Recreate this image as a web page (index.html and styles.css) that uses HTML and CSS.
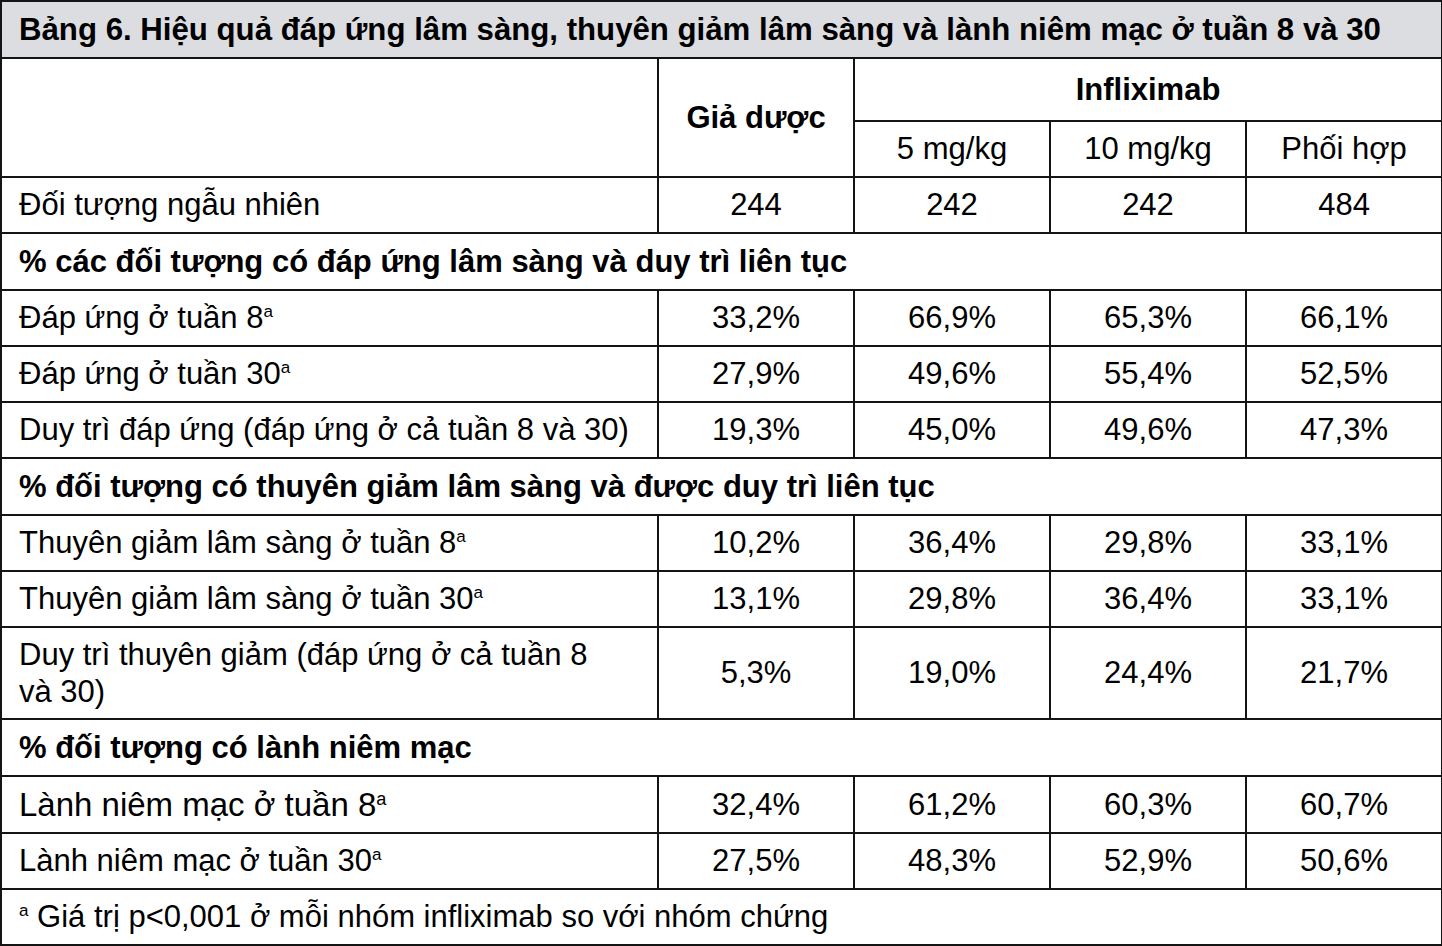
FILE: index.html
```html
<!DOCTYPE html>
<html lang="vi">
<head>
<meta charset="utf-8">
<title>Bảng 6</title>
<link rel="stylesheet" href="styles.css">
</head>
<body>
<table class="tbl">
  <colgroup>
    <col class="c-label">
    <col class="c-num">
    <col class="c-num">
    <col class="c-num">
    <col class="c-num">
  </colgroup>
  <tr class="r-title">
    <td colspan="5" class="title">Bảng 6. Hiệu quả đáp ứng lâm sàng, thuyên giảm lâm sàng và lành niêm mạc ở tuần 8 và 30</td>
  </tr>
  <tr class="r-h1">
    <td rowspan="2"></td>
    <td rowspan="2" class="hd">Giả dược</td>
    <td colspan="3" class="hd">Infliximab</td>
  </tr>
  <tr class="r-h2">
    <td class="num">5 mg/kg</td>
    <td class="num">10 mg/kg</td>
    <td class="num">Phối hợp</td>
  </tr>
  <tr class="r">
    <td class="lbl">Đối tượng ngẫu nhiên</td>
    <td class="num">244</td><td class="num">242</td><td class="num">242</td><td class="num">484</td>
  </tr>
  <tr class="r r57">
    <td colspan="5" class="sec">% các đối tượng có đáp ứng lâm sàng và duy trì liên tục</td>
  </tr>
  <tr class="r">
    <td class="lbl">Đáp ứng ở tuần 8<sup class="sup">a</sup></td>
    <td class="num">33,2%</td><td class="num">66,9%</td><td class="num">65,3%</td><td class="num">66,1%</td>
  </tr>
  <tr class="r">
    <td class="lbl">Đáp ứng ở tuần 30<sup class="sup">a</sup></td>
    <td class="num">27,9%</td><td class="num">49,6%</td><td class="num">55,4%</td><td class="num">52,5%</td>
  </tr>
  <tr class="r">
    <td class="lbl">Duy trì đáp ứng (đáp ứng ở cả tuần 8 và 30)</td>
    <td class="num">19,3%</td><td class="num">45,0%</td><td class="num">49,6%</td><td class="num">47,3%</td>
  </tr>
  <tr class="r r57">
    <td colspan="5" class="sec">% đối tượng có thuyên giảm lâm sàng và được duy trì liên tục</td>
  </tr>
  <tr class="r">
    <td class="lbl">Thuyên giảm lâm sàng ở tuần 8<sup class="sup">a</sup></td>
    <td class="num">10,2%</td><td class="num">36,4%</td><td class="num">29,8%</td><td class="num">33,1%</td>
  </tr>
  <tr class="r">
    <td class="lbl">Thuyên giảm lâm sàng ở tuần 30<sup class="sup">a</sup></td>
    <td class="num">13,1%</td><td class="num">29,8%</td><td class="num">36,4%</td><td class="num">33,1%</td>
  </tr>
  <tr class="r-tall">
    <td class="lbl">Duy trì thuyên giảm (đáp ứng ở cả tuần 8 và 30)</td>
    <td class="num">5,3%</td><td class="num">19,0%</td><td class="num">24,4%</td><td class="num">21,7%</td>
  </tr>
  <tr class="r r57">
    <td colspan="5" class="sec">% đối tượng có lành niêm mạc</td>
  </tr>
  <tr class="r r57">
    <td class="lbl big">Lành niêm mạc ở tuần 8<sup class="sup">a</sup></td>
    <td class="num">32,4%</td><td class="num">61,2%</td><td class="num">60,3%</td><td class="num">60,7%</td>
  </tr>
  <tr class="r">
    <td class="lbl">Lành niêm mạc ở tuần 30<sup class="sup">a</sup></td>
    <td class="num">27,5%</td><td class="num">48,3%</td><td class="num">52,9%</td><td class="num">50,6%</td>
  </tr>
  <tr class="r">
    <td colspan="5" class="lbl foot"><sup class="sup">a</sup> Giá trị p&lt;0,001 ở mỗi nhóm infliximab so với nhóm chứng</td>
  </tr>
</table>
</body>
</html>
```
FILE: styles.css
```css
html, body {
  margin: 0;
  padding: 0;
  background: #ffffff;
}
body {
  font-family: "Liberation Sans", Arial, sans-serif;
  color: #000000;
}
.tbl {
  border-collapse: collapse;
  table-layout: fixed;
  width: 1440px;
  margin: 0;
  font-size: 31px;
  line-height: 36px;
}
.c-label { width: 657px; }
.c-num { width: 196px; }
.tbl td {
  border: 2px solid #141414;
  padding: 0 17px;
  vertical-align: middle;
  box-sizing: border-box;
  overflow: hidden;
  white-space: nowrap;
}
.r-title { height: 57px; }
.title {
  background: #dcdde0;
  font-weight: bold;
  font-size: 31.2px;
  padding-left: 18px;
  padding-top: 2px;
}
.r-h1 { height: 63px; }
.r-h2 { height: 56px; }
.r { height: 56px; }
.r.r57 { height: 57px; }
.r-tall { height: 92px; }
.hd {
  font-weight: bold;
  text-align: center;
}
.num {
  text-align: center;
  padding: 0 4px;
}
.lbl {
  text-align: left;
}
.r-tall .lbl {
  line-height: 37px;
  padding-right: 40px;
  white-space: normal;
}
.sec {
  font-weight: bold;
}
.big {
  font-size: 33px;
}
.sup {
  font-size: 0.55em;
  vertical-align: 0.62em;
  line-height: 0;
}
```
